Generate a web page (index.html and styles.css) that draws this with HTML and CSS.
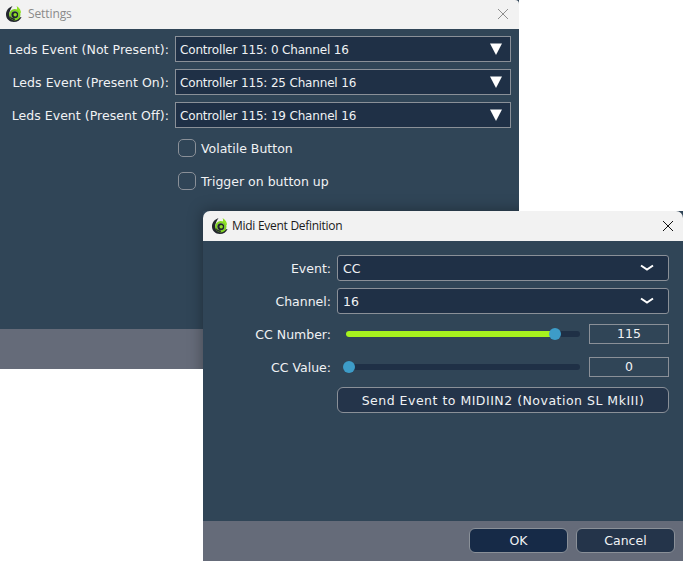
FILE: index.html
```html
<!DOCTYPE html>
<html lang="en">
<head>
<meta charset="utf-8">
<title>Settings</title>
<link rel="stylesheet" href="styles.css">
</head>
<body>
<svg class="defs" width="0" height="0" aria-hidden="true">
  <symbol id="logo" viewBox="0 0 16 16">
    <path d="M6.5 0 C2.5 1.5 0 4.5 0 8.5 C0 12.8 3.4 16 7.8 16 C11.4 16 14.4 14 15.6 11 L13 11.5 C11.5 13 9.5 13.6 7.6 13.2 C4.5 12.6 2.8 9.6 3.4 6.8 C3.8 4.6 5 2.6 6.5 0Z" fill="#23262e"/>
    <circle cx="8.8" cy="8.8" r="4.6" fill="none" stroke="#7fd41f" stroke-width="2.2"/>
    <path d="M3.4 9.6 C4 12.6 6.4 14.2 8.8 14.2 L8.8 12.6 C6.6 12.6 4.8 11.4 3.4 9.6Z" fill="#23262e"/>
    <circle cx="8.8" cy="8.8" r="3.5" fill="#20282c"/>
    <circle cx="9.2" cy="8.8" r="1.7" fill="#8fe024"/>
    <path d="M10.6 0 C13.4 1.8 15.4 4.4 15 7.8 C14.2 6.2 12.6 4.8 10.6 4.2 C11.2 2.8 11.2 1.4 10.6 0Z" fill="#8fe024"/>
  </symbol>
</svg>

<section class="window settings">
  <header class="titlebar inactive">
    <svg class="logo"><use href="#logo"/></svg>
    <span class="title">Settings</span>
    <svg class="close" viewBox="0 0 10 10"><path d="M0 0 10 10M10 0 0 10"/></svg>
  </header>
  <div class="body settings-body">
    <label class="lbl">Leds Event (Not Present):</label>
    <div class="combo square"><span>Controller 115: 0 Channel 16</span><svg class="tri" viewBox="0 0 12 12"><path d="M0 .5H12L6 12Z"/></svg></div>
    <label class="lbl">Leds Event (Present On):</label>
    <div class="combo square"><span>Controller 115: 25 Channel 16</span><svg class="tri" viewBox="0 0 12 12"><path d="M0 .5H12L6 12Z"/></svg></div>
    <label class="lbl">Leds Event (Present Off):</label>
    <div class="combo square"><span>Controller 115: 19 Channel 16</span><svg class="tri" viewBox="0 0 12 12"><path d="M0 .5H12L6 12Z"/></svg></div>
    <div class="check"><i class="box"></i><span>Volatile Button</span></div>
    <div class="check"><i class="box"></i><span>Trigger on button up</span></div>
  </div>
  <footer class="footer short"></footer>
</section>

<section class="window midi">
  <header class="titlebar">
    <svg class="logo"><use href="#logo"/></svg>
    <span class="title">Midi Event Definition</span>
    <svg class="close" viewBox="0 0 10 10"><path d="M0 0 10 10M10 0 0 10"/></svg>
  </header>
  <div class="body midi-body">
    <label class="lbl">Event:</label>
    <div class="combo"><span>CC</span><svg class="chev" viewBox="0 0 14 8"><path d="M1 1.5 7 5.5 13 1.5"/></svg></div>
    <label class="lbl">Channel:</label>
    <div class="combo"><span>16</span><svg class="chev" viewBox="0 0 14 8"><path d="M1 1.5 7 5.5 13 1.5"/></svg></div>
    <label class="lbl">CC Number:</label>
    <div class="slider-row">
      <div class="track"><div class="fill" style="width:89.5%"></div><i class="knob" style="left:89.5%"></i></div>
      <div class="num">115</div>
    </div>
    <label class="lbl">CC Value:</label>
    <div class="slider-row">
      <div class="track"><i class="knob" style="left:1.3%"></i></div>
      <div class="num">0</div>
    </div>
    <div class="send">Send Event to MIDIIN2 (Novation SL MkIII)</div>
  </div>
  <footer class="footer actions">
    <button class="btn ok">OK</button>
    <button class="btn">Cancel</button>
  </footer>
</section>
</body>
</html>
```
FILE: styles.css
```css
html, body {
  margin: 0;
  height: 100%;
  background: #fff;
  overflow: hidden;
}
.defs { position: absolute; }
.window {
  position: absolute;
  display: flex;
  flex-direction: column;
  font-family: "DejaVu Sans", sans-serif;
  font-size: 12.5px;
  color: #f0f2f4;
  background: #304557;
}
.settings { left: 0; top: 0; width: 519px; height: 369px; overflow: hidden; }
.settings::after {
  content: "";
  position: absolute;
  left: 203px;
  top: 211px;
  width: 480px;
  height: 350px;
  box-shadow: 0 0 14px rgba(0, 0, 0, .35);
}
.midi { left: 203px; top: 211px; width: 480px; height: 350px; }
.titlebar {
  display: flex;
  align-items: center;
  flex: none;
  box-sizing: border-box;
  height: 30px;
  padding: 0 10px 1px 9px;
  background: #f2f2f2;
  color: #1a1a1a;
  font-family: "Open Sans", sans-serif;
  font-size: 12px;
  letter-spacing: -.28px;
  border-radius: 7px 7px 0 0;
}
.titlebar.inactive {
  height: 29px;
  padding: 0 11px 2px 6px;
  color: #8a8a8a;
  letter-spacing: -.1px;
  border-radius: 0 4px 0 0;
}
.logo { width: 16px; height: 16px; margin-right: 6px; }
.midi .logo { margin-right: 4px; }
.title { flex: 1; }
.close { width: 10px; height: 10px; fill: none; stroke: #111; stroke-width: 1; }
.inactive .close { stroke: #8e8e8e; }
.body { flex: 1; display: grid; align-content: start; align-items: center; }
.settings-body {
  grid-template-columns: 175px 336px;
  row-gap: 7px;
  padding-top: 7px;
}
.settings-body .lbl { letter-spacing: .05px; }
.midi-body {
  grid-template-columns: 134px 332px;
  row-gap: 7px;
  padding-top: 14px;
}
.lbl { text-align: right; padding-right: 6px; }
.combo {
  display: flex;
  align-items: center;
  justify-content: space-between;
  box-sizing: border-box;
  height: 26px;
  padding: 0 14px 0 5px;
  background: #1f3046;
  border: 1px solid #8a9098;
  border-radius: 3px;
}
.combo.square {
  border-radius: 0;
  padding: 1px 8px 0 4px;
  font-size: 12px;
  letter-spacing: -.17px;
}
.tri { width: 12px; height: 12px; fill: #fff; margin-top: -1px; }
.chev { width: 14px; height: 8px; fill: none; stroke: #fff; stroke-width: 2; }
.check {
  grid-column: 2;
  display: flex;
  align-items: center;
  gap: 5px;
  height: 26px;
  padding-left: 3px;
}
.box {
  box-sizing: border-box;
  width: 18px;
  height: 18px;
  border: 1px solid #8a9098;
  border-radius: 5px;
}
.slider-row {
  display: flex;
  align-items: center;
  gap: 9px;
  height: 26px;
  padding-left: 9px;
}
.track {
  position: relative;
  flex: 1;
  height: 6px;
  border-radius: 3px;
  background: #1f3046;
}
.fill { height: 100%; border-radius: 3px; background: #a6f31e; }
.knob {
  position: absolute;
  top: -3px;
  width: 12px;
  height: 12px;
  margin-left: -6px;
  border-radius: 50%;
  background: #3d9cc8;
}
.num {
  box-sizing: border-box;
  width: 80px;
  height: 20px;
  line-height: 18px;
  text-align: center;
  border: 1px solid #8a9098;
}
.send {
  grid-column: 2;
  box-sizing: border-box;
  height: 26px;
  line-height: 26px;
  text-align: center;
  letter-spacing: .5px;
  background: #24344a;
  border: 1px solid #8a9098;
  border-radius: 6px;
}
.footer { flex: none; background: #656b79; }
.footer.short { height: 40px; }
.actions {
  display: flex;
  justify-content: flex-end;
  gap: 8px;
  height: 40px;
  padding: 7px 8px 0 0;
  box-sizing: border-box;
}
.btn {
  box-sizing: border-box;
  width: 99px;
  height: 25px;
  padding: 0;
  font: inherit;
  color: #f0f2f4;
  background: #24344a;
  border: 1px solid #8a9098;
  border-radius: 6px;
}
.btn.ok { background: #162a47; }
```
